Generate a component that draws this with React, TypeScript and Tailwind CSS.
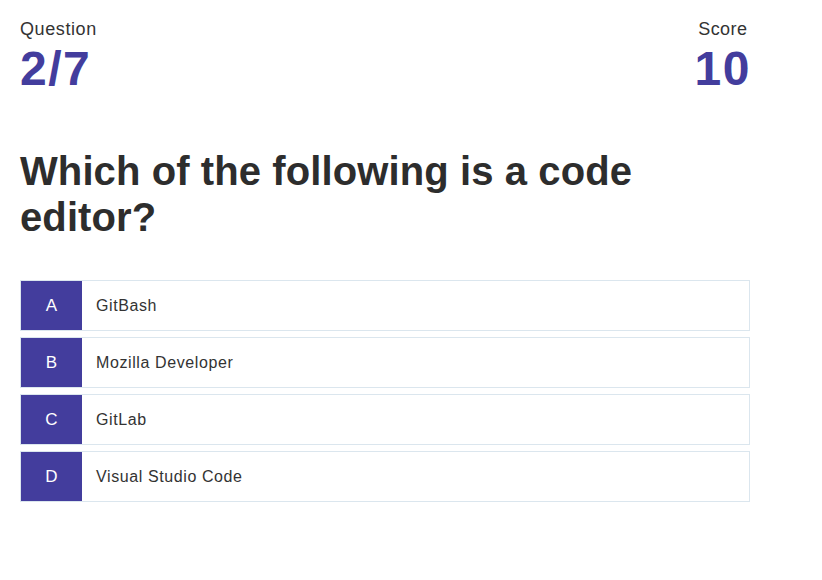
const options = [
  { letter: 'A', text: 'GitBash' },
  { letter: 'B', text: 'Mozilla Developer' },
  { letter: 'C', text: 'GitLab' },
  { letter: 'D', text: 'Visual Studio Code' },
]

export default function App() {
  return (
    <div className="min-h-[580px] bg-white px-5 pt-[17px] font-['Liberation_Sans',Arial,sans-serif] text-[#333]">
      <div className="w-[730px]">
        <div className="flex justify-between">
          <div className="flex flex-col">
            <p className="text-lg leading-6 tracking-[0.6px]">Question</p>
            <p className="mt-[3px] text-5xl font-bold leading-[50px] tracking-[1.5px] text-[#433d9d]">2/7</p>
          </div>
          <div className="-mr-[1px] flex flex-col items-center">
            <p className="text-lg leading-6 tracking-[0.4px]">Score</p>
            <p className="mt-[3px] text-5xl font-bold leading-[50px] tracking-[1.5px] text-[#433d9d]">10</p>
          </div>
        </div>

        <h1 className="mt-[54px] w-[640px] text-[40px] font-bold leading-[46px] tracking-[0.1px] text-[#2d2d2d]">Which of the following is a code editor?</h1>

        <div className="mt-[40px] flex flex-col gap-[6px]">
          {options.map((o) => (
            <div key={o.letter} className="flex h-[51px] items-center border border-[#dbe6ee] bg-white">
              <div className="flex h-full w-[61px] items-center justify-center bg-[#433d9d] text-[17px] text-white">{o.letter}</div>
              <span className="pl-[14px] text-base tracking-[0.6px] text-[#333]">{o.text}</span>
            </div>
          ))}
        </div>
      </div>
    </div>
  )
}
